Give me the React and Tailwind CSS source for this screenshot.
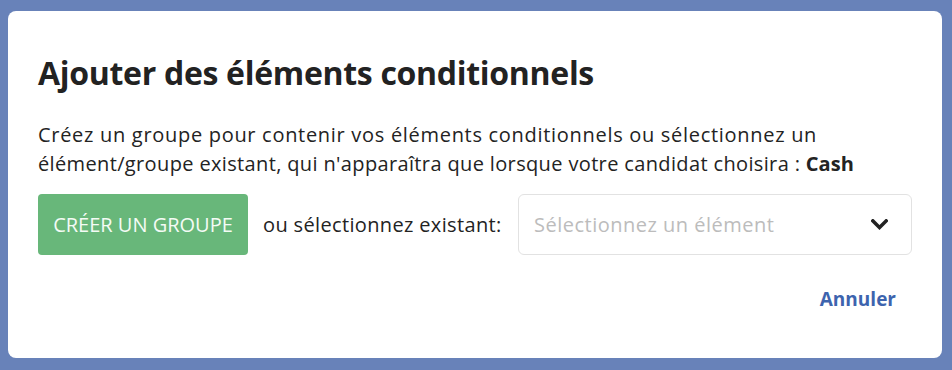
import React from "react";

function Chevron() {
  return (
    <svg width="17" height="11" viewBox="0 0 17 11" fill="none">
      <path d="M1.8 1.8 L8.5 8.5 L15.2 1.8" stroke="#222" strokeWidth="3.4" strokeLinecap="square" strokeLinejoin="miter" />
    </svg>
  );
}

export default function App() {
  const font = { fontFamily: '"Open Sans", "Noto Sans", sans-serif' };
  return (
    <div className="w-[952px] h-[370px] overflow-hidden bg-[#6882b9] pt-[11px] pl-[8px]" style={font}>
      <div className="w-[934px] h-[347px] rounded-[8px] bg-white px-[30px] pt-[38px] text-[#232323]">
        <h1 className="text-[32px] font-bold leading-[48px] tracking-[-0.3px] text-[#222]">
          Ajouter des éléments conditionnels
        </h1>
        <p className="mt-[24px] text-[20px] leading-[28.5px]">
          <span className="block tracking-[0.7px]">
            Créez un groupe pour contenir vos éléments conditionnels ou sélectionnez un
          </span>
          <span className="block tracking-[0.36px]">
            élément/groupe existant, qui n'apparaîtra que lorsque votre candidat choisira : <span className="font-bold tracking-[0px]">Cash</span>
          </span>
        </p>
        <div className="mt-[16px] flex items-center">
          <button className="w-[210px] h-[61px] rounded-[4px] bg-[#68b77a] text-[20px] text-[#f4fbf5] uppercase">
            Créer un groupe
          </button>
          <span className="ml-[15px] text-[20px] tracking-[0.35px]">ou sélectionnez existant:</span>
          <div className="ml-auto w-[394px] h-[61px] rounded-[6px] border border-[#e2e2e2] flex items-center pl-[15px] pr-[23px]">
            <span className="flex-1 text-[20px] tracking-[0.5px] text-[#bcbcbc]">Sélectionnez un élément</span>
            <Chevron />
          </div>
        </div>
        <div className="mt-[22px] flex justify-end">
          <button className="px-[16px] h-[44px] text-[19px] font-bold text-[#3d64ae]">Annuler</button>
        </div>
      </div>
    </div>
  );
}
